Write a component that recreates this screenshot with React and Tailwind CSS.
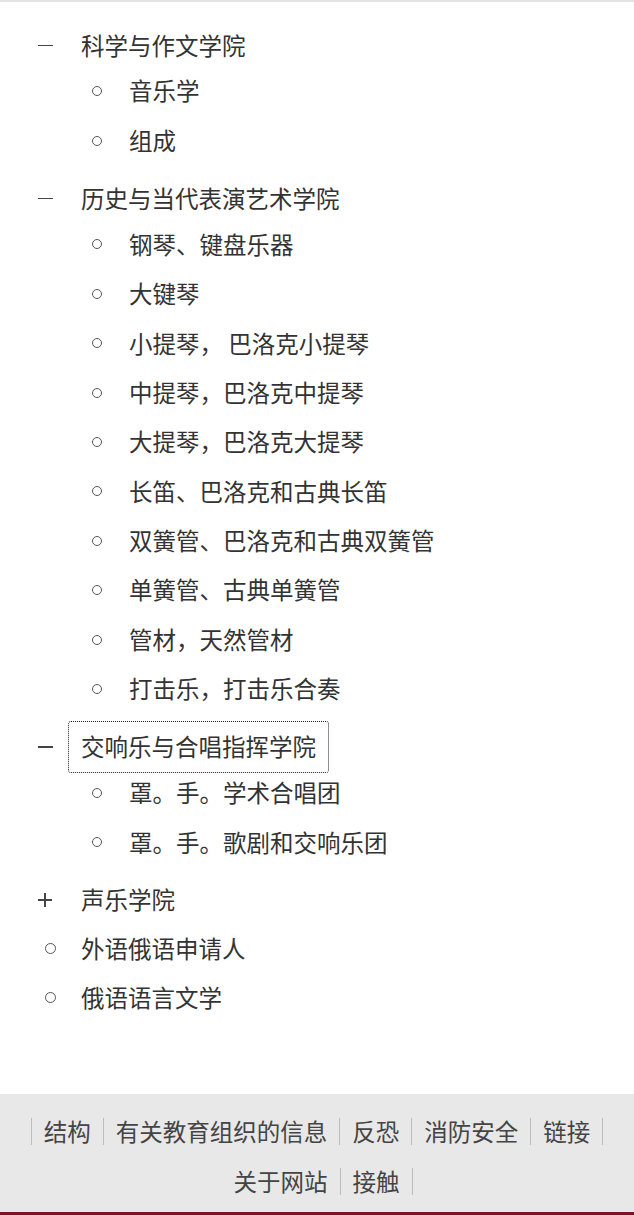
import React from "react";

const font = { fontFamily: '"Noto Sans CJK SC", "Noto Sans", sans-serif' };

const groups = [
  { title: "科学与作文学院", open: true, subs: ["音乐学", "组成"] },
  {
    title: "历史与当代表演艺术学院",
    open: true,
    subs: [
      "钢琴、键盘乐器",
      "大键琴",
      "小提琴， 巴洛克小提琴",
      "中提琴，巴洛克中提琴",
      "大提琴，巴洛克大提琴",
      "长笛、巴洛克和古典长笛",
      "双簧管、巴洛克和古典双簧管",
      "单簧管、古典单簧管",
      "管材，天然管材",
      "打击乐，打击乐合奏",
    ],
  },
  {
    title: "交响乐与合唱指挥学院",
    open: true,
    focus: true,
    subs: ["罩。手。学术合唱团", "罩。手。歌剧和交响乐团"],
  },
];

function Dash() {
  return <span className="block w-[15px] h-[1.5px] bg-[#444]" />;
}

function Plus() {
  return (
    <span className="relative block w-[14px] h-[14px]">
      <span className="absolute left-0 top-[6px] w-[14px] h-[1.5px] bg-[#444]" />
      <span className="absolute top-0 left-[6px] h-[14px] w-[1.5px] bg-[#444]" />
    </span>
  );
}

function Circle({ size = "w-[10px] h-[10px]" }) {
  return <span className={`block rounded-full border border-[#555] ${size}`} />;
}

function Header({ title, marker, focus }) {
  return (
    <div className="flex items-center h-[42.5px] pl-[38px]">
      <span className="w-[43px] flex items-center">{marker}</span>
      {focus ? (
        <span className="-ml-[13px] flex items-center h-[52px] px-[12px] border border-dotted border-[#222] rounded-[3px]">
          {title}
        </span>
      ) : (
        <span>{title}</span>
      )}
    </div>
  );
}

function Sub({ text }) {
  return (
    <li className="flex items-center h-[49.4px] pl-[92px]">
      <span className="w-[37px] flex items-center">
        <Circle />
      </span>
      <span>{text}</span>
    </li>
  );
}

const footerRow = ["结构", "有关教育组织的信息", "反恐", "消防安全", "链接", "关于网站", "接触"];

export default function App() {
  return (
    <div style={font} className="h-[1215px] flex flex-col bg-white text-[#333] text-[23.5px] leading-none">
      <div className="flex-1 border-t-2 border-[#e3e3e3] pt-[22px]">
        <ul>
          {groups.map((g) => (
            <li key={g.title} className="mb-[12px]">
              <Header title={g.title} marker={<Dash />} focus={g.focus} />
              <ul>
                {g.subs.map((s) => (
                  <Sub key={s} text={s} />
                ))}
              </ul>
            </li>
          ))}
          <li>
            <Header title="声乐学院" marker={<Plus />} />
          </li>
          <li className="flex items-center h-[49px] mt-[3px] pl-[45px]">
            <span className="w-[36px] flex items-center">
              <Circle size="w-[11px] h-[11px]" />
            </span>
            <span>外语俄语申请人</span>
          </li>
          <li className="flex items-center h-[49px] pl-[45px]">
            <span className="w-[36px] flex items-center">
              <Circle size="w-[11px] h-[11px]" />
            </span>
            <span>俄语语言文学</span>
          </li>
        </ul>
      </div>
      <footer className="bg-[#e8e8e8] border-b-[3px] border-[#7d1229] pt-[24px] pb-[17px] px-2">
        <nav className="flex flex-wrap justify-center gap-y-[23px] text-[#444]">
          {footerRow.map((t, i) => (
            <a
              key={t}
              className={`flex items-center h-[27px] px-3 border-r border-[#bdbdbd] ${i === 0 ? "border-l" : ""}`}
            >
              {t}
            </a>
          ))}
        </nav>
      </footer>
    </div>
  );
}
